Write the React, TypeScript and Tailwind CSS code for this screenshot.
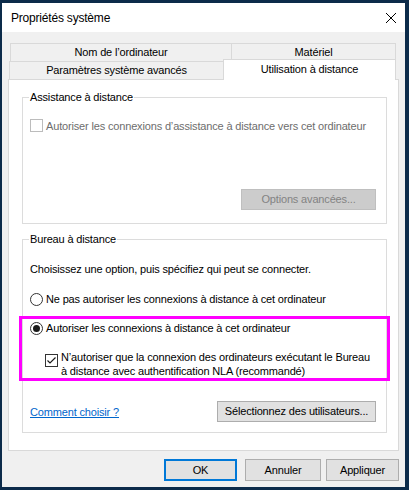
import React from "react";

const F = { fontFamily: '"Liberation Sans", Arial, sans-serif' };

function Radio({ checked }: { checked?: boolean }) {
  return (
    <svg width="13" height="13" viewBox="0 0 13 13" className="shrink-0">
      <circle cx="6.5" cy="6.5" r="6" fill="#fff" stroke="#333" strokeWidth="1" />
      {checked && <circle cx="6.5" cy="6.5" r="3.5" fill="#1a1a1a" />}
    </svg>
  );
}

function Check({ checked, disabled }: { checked?: boolean; disabled?: boolean }) {
  return (
    <svg width="13" height="13" viewBox="0 0 13 13" className="shrink-0">
      <rect x="0.5" y="0.5" width="12" height="12" fill="#fff" stroke={disabled ? "#bcbcbc" : "#333"} strokeWidth="1" />
      {checked && <path d="M2.5 6.5 L5 9 L10.5 3.5" fill="none" stroke="#1a1a1a" strokeWidth="1.2" />}
    </svg>
  );
}

export default function App() {
  return (
    <div className="w-[409px] h-[490px] bg-[#0c2b4a] pt-[3px] pl-[2px] pr-[4px] pb-[3px] flex flex-col" style={F}>
      <div className="flex-1 flex flex-col bg-[#f0f0f0]">
        <div className="h-[29px] bg-white flex items-center justify-between pl-[9px] pr-[9px]">
          <span className="text-[12px] text-black tracking-[-0.2px]">Propriétés système</span>
          <svg width="10" height="10" viewBox="0 0 10 10">
            <path d="M0 0 L10 10 M10 0 L0 10" stroke="#000" strokeWidth="1" />
          </svg>
        </div>
        <div className="px-[6px] pt-[11px] flex flex-col text-[11px] text-black tracking-[-0.16px]">
          {/* tabs row 1 */}
          <div className="flex pl-[2px] h-[18px]">
            <div className="w-[221px] border-t border-l border-[#d9d9d9] bg-[#f0f0f0] flex items-center justify-center">Nom de l’ordinateur</div>
            <div className="w-[165px] border-t border-l border-r border-[#d9d9d9] bg-[#f0f0f0] flex items-center justify-center">Matériel</div>
          </div>
          {/* tabs row 2 */}
          <div className="flex pl-[1px] h-[18px] items-start">
            <div className="w-[214px] h-[18px] border-t border-l border-[#d9d9d9] bg-[#f0f0f0] flex items-center justify-center">Paramètres système avancés</div>
            <div className="relative z-10 w-[173px] h-[21px] -mt-[2px] border-t border-l border-r border-[#d9d9d9] bg-white flex items-center justify-center pb-[2px]">Utilisation à distance</div>
          </div>
          {/* panel */}
          <div className="h-[372px] border border-[#d9d9d9] bg-white pl-[13px] pt-[17px]">
            {/* group 1 */}
            <div className="relative w-[365px] h-[127px] border border-[#dcdcdc] flex flex-col">
              <span className="absolute left-[6px] -top-[8px] bg-white px-[1px] leading-[14px]">Assistance à distance</span>
              <div className="flex items-center gap-[3px] pl-[7px] mt-[21px] h-[13px]">
                <Check disabled />
                <span className="text-[#6d6d6d] leading-[14px]">Autoriser les connexions d’assistance à distance vers cet ordinateur</span>
              </div>
              <div className="flex justify-end pr-[10px] mt-[57px]">
                <div className="w-[135px] h-[21px] bg-[#cccccc] border border-[#bfbfbf] text-[#838383] flex items-center justify-center">Options avancées...</div>
              </div>
            </div>
            {/* group 2 */}
            <div className="relative w-[365px] h-[194px] mt-[15px] border border-[#dcdcdc] flex flex-col">
              <span className="absolute left-[6px] -top-[8px] bg-white px-[1px] leading-[14px]">Bureau à distance</span>
              <div className="pl-[7px] mt-[22px] leading-[14px]">Choisissez une option, puis spécifiez qui peut se connecter.</div>
              <div className="flex items-center gap-[3px] pl-[7px] mt-[16px] h-[14px]">
                <Radio />
                <span className="leading-[14px]">Ne pas autoriser les connexions à distance à cet ordinateur</span>
              </div>
              <div className="flex items-center gap-[3px] pl-[7px] mt-[15px] h-[14px]">
                <Radio checked />
                <span className="leading-[14px]">Autoriser les connexions à distance à cet ordinateur</span>
              </div>
              <div className="flex items-start gap-[3px] pl-[22px] mt-[15px]">
                <div className="pt-[4px]"><Check checked /></div>
                <span className="leading-[14px]">N’autoriser que la connexion des ordinateurs exécutant le Bureau<br />à distance avec authentification NLA (recommandé)</span>
              </div>
              <div className="flex items-center justify-between pl-[7px] pr-[10px] mt-[23px]">
                <span className="text-[#0066cc] underline leading-[14px]">Comment choisir ?</span>
                <div className="w-[159px] h-[21px] bg-[#e1e1e1] border border-[#adadad] flex items-center justify-center">Sélectionnez des utilisateurs...</div>
              </div>
              <div className="absolute left-[-4px] top-[76px] w-[371px] h-[65px] border-[3px] border-[#ff00ff]" />
            </div>
          </div>
          {/* bottom buttons */}
          <div className="flex justify-end mt-[8px] gap-[5px]">
            <div className="w-[73px] h-[22px] bg-[#e1e1e1] border-2 border-[#0078d7] flex items-center justify-center mr-[3px]">OK</div>
            <div className="w-[76px] h-[22px] bg-[#e1e1e1] border border-[#adadad] flex items-center justify-center">Annuler</div>
            <div className="w-[73px] h-[22px] bg-[#e1e1e1] border border-[#adadad] flex items-center justify-center">Appliquer</div>
          </div>
        </div>
      </div>
    </div>
  );
}
